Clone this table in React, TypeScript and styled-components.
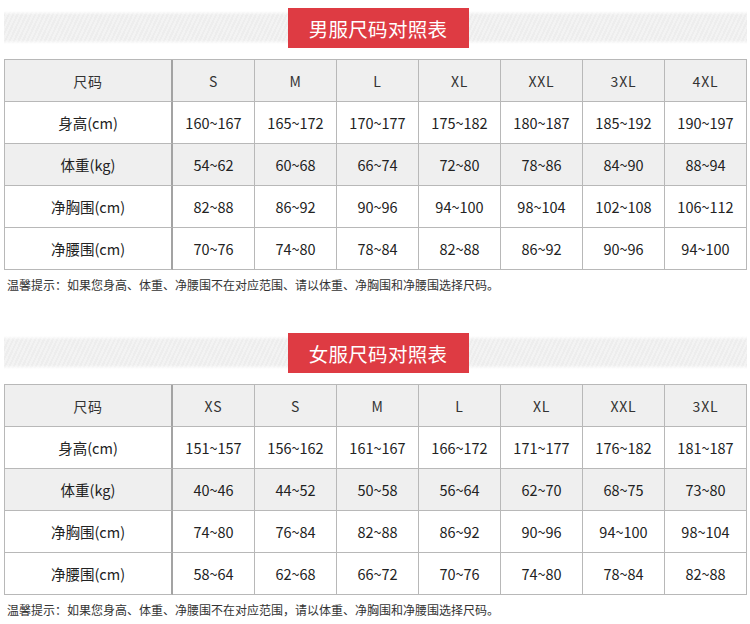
import styled, { createGlobalStyle } from "styled-components";

const GlobalStyle = createGlobalStyle`
  body {
    margin: 0;
    background: #fff;
    font-family: "Noto Sans CJK SC", "Noto Sans", sans-serif;
    color: #222;
  }
`;

type Chart = {
  title: string;
  sizes: string[];
  rows: { label: string; values: string[] }[];
  note: string;
};

const charts: Chart[] = [
  {
    title: "男服尺码对照表",
    sizes: ["S", "M", "L", "XL", "XXL", "3XL", "4XL"],
    rows: [
      { label: "身高(cm)", values: ["160~167", "165~172", "170~177", "175~182", "180~187", "185~192", "190~197"] },
      { label: "体重(kg)", values: ["54~62", "60~68", "66~74", "72~80", "78~86", "84~90", "88~94"] },
      { label: "净胸围(cm)", values: ["82~88", "86~92", "90~96", "94~100", "98~104", "102~108", "106~112"] },
      { label: "净腰围(cm)", values: ["70~76", "74~80", "78~84", "82~88", "86~92", "90~96", "94~100"] },
    ],
    note: "温馨提示：如果您身高、体重、净腰围不在对应范围、请以体重、净胸围和净腰围选择尺码。",
  },
  {
    title: "女服尺码对照表",
    sizes: ["XS", "S", "M", "L", "XL", "XXL", "3XL"],
    rows: [
      { label: "身高(cm)", values: ["151~157", "156~162", "161~167", "166~172", "171~177", "176~182", "181~187"] },
      { label: "体重(kg)", values: ["40~46", "44~52", "50~58", "56~64", "62~70", "68~75", "73~80"] },
      { label: "净胸围(cm)", values: ["74~80", "76~84", "82~88", "86~92", "90~96", "94~100", "98~104"] },
      { label: "净腰围(cm)", values: ["58~64", "62~68", "66~72", "70~76", "74~80", "78~84", "82~88"] },
    ],
    note: "温馨提示：如果您身高、体重、净腰围不在对应范围，请以体重、净胸围和净腰围选择尺码。",
  },
];

const Page = styled.div`
  display: flex;
  flex-direction: column;
  gap: 39px;
  padding: 8px 3px 0 4px;
`;

const Section = styled.section`
  display: flex;
  flex-direction: column;
`;

// grey textured strip behind the red title
const TitleBar = styled.div`
  display: flex;
  justify-content: center;
  height: 40px;
  padding-left: 5px;
  background:
    linear-gradient(to bottom, #fff 0, #fff 3px, rgba(255,255,255,0) 7px, rgba(255,255,255,0) 32px, #fff 36px, #fff 100%),
    repeating-linear-gradient(115deg, #f3f3f3 0 2px, #ededed 2px 4px);
`;

const Title = styled.h2`
  margin: 0;
  width: 181px;
  height: 40px;
  display: flex;
  align-items: center;
  justify-content: center;
  background: #de3b43;
  color: #fff;
  font-size: 19.5px;
  font-weight: 400;
  letter-spacing: 0.3px;
`;

const Table = styled.div`
  margin-top: 11px;
  display: grid;
  border-top: 1px solid #b8b8b8;
  border-left: 1px solid #b8b8b8;
`;

const Row = styled.div<{ $shaded?: boolean }>`
  display: grid;
  grid-template-columns: 168px repeat(7, 82px);
  height: 42px;
  background: ${(p) => (p.$shaded ? "#efefef" : "#fff")};
`;

const Cell = styled.div<{ $head?: boolean; $first?: boolean }>`
  display: flex;
  align-items: center;
  justify-content: center;
  border-bottom: 1px solid #b8b8b8;
  border-right: ${(p) => (p.$first ? "2px solid #a3a3a3" : "1px solid #b8b8b8")};
  font-size: ${(p) => (p.$head ? "14px" : "14.5px")};
  color: ${(p) => (p.$head ? "#333" : "#222")};
  letter-spacing: ${(p) => (p.$head ? "0.8px" : "0")};
`;

const Note = styled.p`
  margin: 6px 0 0 3px;
  font-size: 12px;
  line-height: 18px;
  color: #333;
`;

export default function App() {
  return (
    <>
      <GlobalStyle />
      <Page>
        {charts.map((c) => (
          <Section key={c.title}>
            <TitleBar>
              <Title>{c.title}</Title>
            </TitleBar>
            <Table>
              <Row $shaded>
                <Cell $head $first>尺码</Cell>
                {c.sizes.map((s) => (
                  <Cell $head key={s}>{s}</Cell>
                ))}
              </Row>
              {c.rows.map((r, i) => (
                <Row key={r.label} $shaded={i === 1}>
                  <Cell $first>{r.label}</Cell>
                  {r.values.map((v, j) => (
                    <Cell key={j}>{v}</Cell>
                  ))}
                </Row>
              ))}
            </Table>
            <Note>{c.note}</Note>
          </Section>
        ))}
      </Page>
    </>
  );
}
